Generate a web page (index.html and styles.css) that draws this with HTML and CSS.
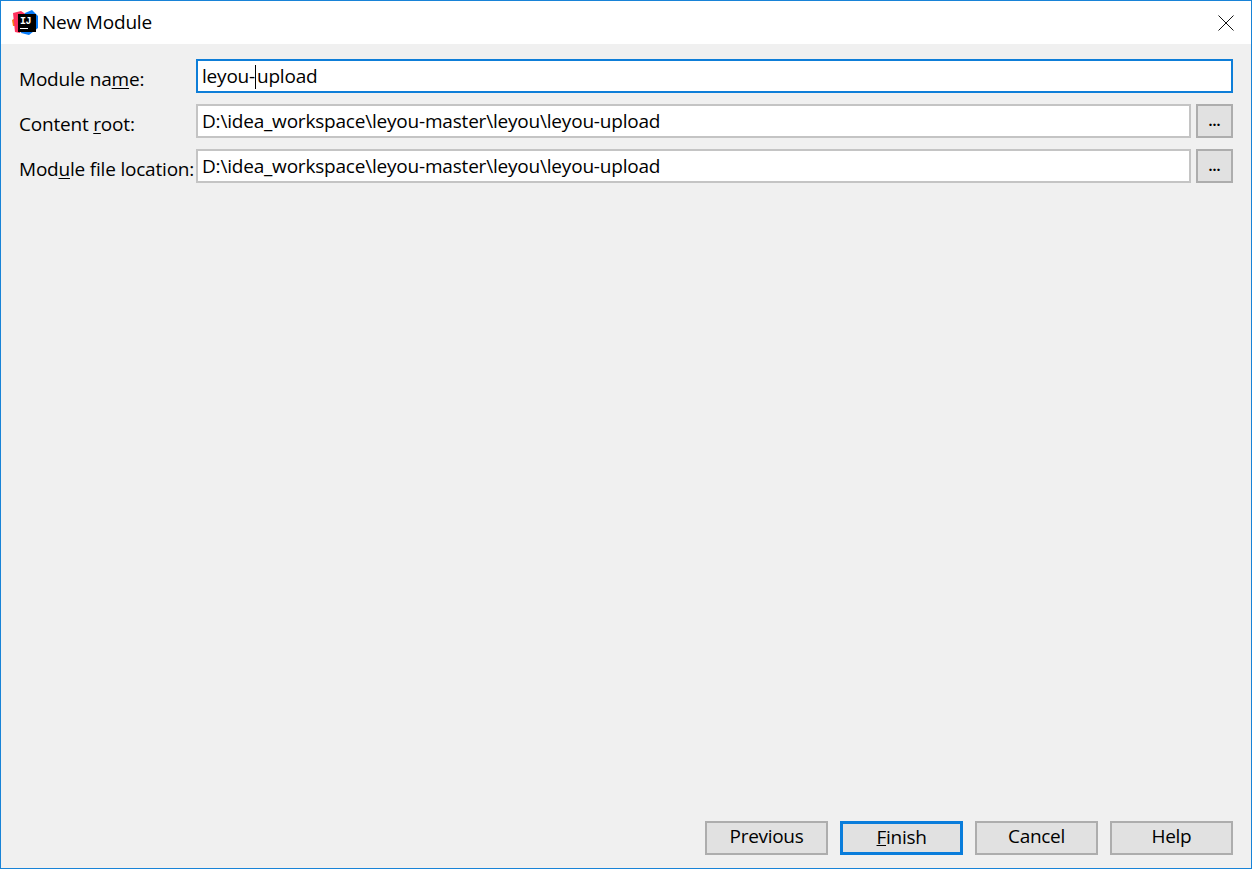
FILE: index.html
```html
<!DOCTYPE html>
<html lang="en">
<head>
<meta charset="utf-8">
<title>New Module</title>
<link rel="stylesheet" href="styles.css">
</head>
<body>
<div class="window">
  <header class="titlebar">
    <svg class="app-icon" width="26" height="26" viewBox="0 0 26 26">
      <path d="M0 10 L5 7 L7 16 L1 16 Z" fill="#f97a12"/>
      <path d="M1 3 L9 1 L15 5 L8 23 L3 22 Z" fill="#fe315d"/>
      <path d="M13 3 L20 0 L26 6 L26 18 L17 25 L9 23 Z" fill="#087cfa"/>
      <rect x="6" y="4" width="18" height="18" fill="#000"/>
      <rect x="8" y="18" width="8" height="1" fill="#fff"/>
      <text class="app-icon-text" x="8" y="14">IJ</text>
    </svg>
    <span class="title">New Module</span>
    <svg class="close" width="16" height="16" viewBox="0 0 16 16">
      <path d="M0.5 0.5 L15.5 15.5 M15.5 0.5 L0.5 15.5" stroke="#111" stroke-width="1" fill="none"/>
    </svg>
  </header>
  <main class="content">
    <form class="form">
      <div class="row">
        <label class="label">Module na<u>m</u>e:</label>
        <div class="field field-focus">leyou-<span class="caret"></span>upload</div>
      </div>
      <div class="row">
        <label class="label">Content <u>r</u>oot:</label>
        <div class="field">D:\idea_workspace\leyou-master\leyou\leyou-upload</div>
        <button type="button" class="browse">...</button>
      </div>
      <div class="row">
        <label class="label">Mod<u>u</u>le file location:</label>
        <div class="field">D:\idea_workspace\leyou-master\leyou\leyou-upload</div>
        <button type="button" class="browse">...</button>
      </div>
    </form>
    <footer class="actions">
      <button type="button" class="btn">Previous</button>
      <button type="button" class="btn btn-default"><u>F</u>inish</button>
      <button type="button" class="btn">Cancel</button>
      <button type="button" class="btn">Help</button>
    </footer>
  </main>
</div>
</body>
</html>
```
FILE: styles.css
```css
* { box-sizing: border-box; }
html, body { margin: 0; padding: 0; }
body {
  width: 1252px;
  height: 869px;
  overflow: hidden;
  font-family: "Open Sans", "Noto Sans", sans-serif;
  font-size: 19px;
  letter-spacing: -0.2px;
  color: #000;
}
.window {
  width: 1252px;
  height: 869px;
  border: 1px solid #1883d7;
  display: flex;
  flex-direction: column;
  background: #f0f0f0;
}
.titlebar {
  height: 43px;
  flex: none;
  background: #fff;
  display: flex;
  align-items: center;
  padding: 0 17px 0 11px;
}
.app-icon { flex: none; }
.app-icon-text {
  font-family: "Liberation Mono", monospace;
  font-size: 10px;
  font-weight: 700;
  letter-spacing: -0.5px;
  fill: #fff;
}
.title { margin-left: 4px; flex: 1; line-height: 40px; height: 42px; }
.close { flex: none; }
.content {
  flex: 1;
  display: flex;
  flex-direction: column;
  justify-content: space-between;
  padding: 15px 18px 13px 18px;
}
.form { display: flex; flex-direction: column; gap: 11px; }
.row { display: flex; height: 34px; align-items: stretch; }
.label {
  width: 177px;
  flex: none;
  line-height: 40px;
  height: 34px;
  white-space: nowrap;
}
.label u { text-underline-offset: 2px; }
.field {
  flex: 1;
  background: #fff;
  border: 2px solid #c4c4c4;
  padding-left: 4px;
  line-height: 30px;
  white-space: nowrap;
}
.field-focus { border-color: #0e7ed8; }
.caret {
  display: inline-block;
  width: 1px;
  height: 24px;
  margin: 0 1px 0 0;
  background: #000;
  vertical-align: -6px;
}
.browse {
  flex: none;
  width: 37px;
  margin-left: 5px;
  background: #e1e1e1;
  border: 2px solid #adadad;
  padding: 0;
  font: inherit;
  font-size: 14px;
  font-weight: 700;
  line-height: 1;
  color: #000;
}
.actions { display: flex; justify-content: flex-end; gap: 12px; }
.btn {
  width: 123px;
  height: 34px;
  background: #e1e1e1;
  border: 2px solid #adadad;
  padding: 0 0 4px;
  font: inherit;
  letter-spacing: -0.3px;
  color: #000;
}
.btn-default { border: 3px solid #0a7ddb; padding-bottom: 6px; }
```
